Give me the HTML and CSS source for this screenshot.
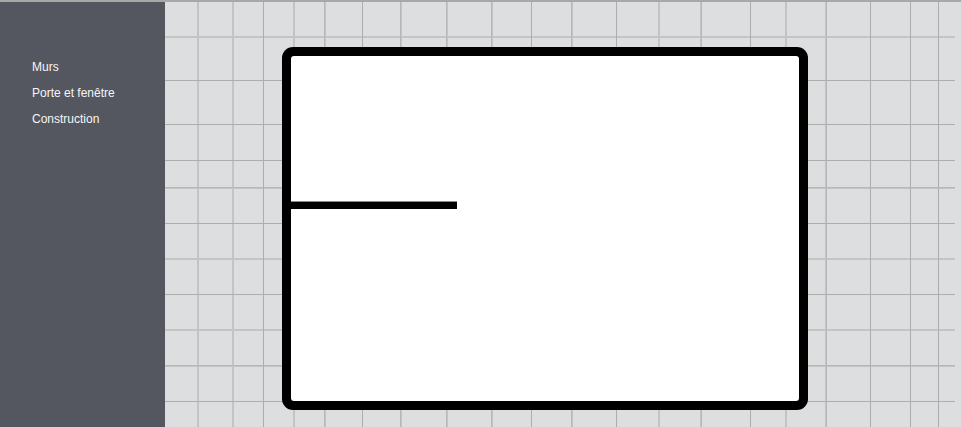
FILE: index.html
```html
<!DOCTYPE html>
<html lang="fr">
<head>
<meta charset="utf-8">
<title>Plan</title>
<link rel="stylesheet" href="styles.css">
</head>
<body>
<div class="app">
  <nav class="sidebar">
    <a class="tool" href="#murs">Murs</a>
    <a class="tool" href="#portes">Porte et fenêtre</a>
    <a class="tool" href="#construction">Construction</a>
  </nav>
  <main class="canvas">
    <svg class="plan" aria-hidden="true">
      <!-- grid: soft lines are two pixels wide, sharp lines one -->
      <path class="soft" d="M32 0h2v425h-2zM67 0h2v425h-2zM128 0h2v425h-2zM159 0h2v425h-2zM235 0h2v425h-2zM281 0h2v425h-2zM326 0h2v425h-2zM406 0h2v425h-2zM493 0h2v425h-2zM535 0h2v425h-2zM620 0h2v425h-2zM660 0h2v425h-2z"/>
      <path class="soft" d="M0 34h790v2H0zM0 185h790v2H0zM0 256h790v2H0zM0 327h790v2H0zM0 363h790v2H0z"/>
      <path class="sharp" d="M98 0h1v425h-1zM197 0h1v425h-1zM366 0h1v425h-1zM451 0h1v425h-1zM585 0h1v425h-1zM705 0h1v425h-1zM745 0h1v425h-1zM773 0h1v425h-1z"/>
      <path class="sharp" d="M0 78h790v1H0zM0 122h790v1H0zM0 158h790v1H0zM0 221h790v1H0zM0 292h790v1H0zM0 399h790v1H0z"/>
      <path class="mid" d="M159 0h1v425h-1zM235 0h1v425h-1zM281 0h1v425h-1zM326 0h1v425h-1zM406 0h1v425h-1zM536 0h1v425h-1zM661 0h1v425h-1zM0 185h790v1H0zM0 363h790v1H0z"/>
      <!-- walls -->
      <rect class="wall" x="117" y="45" width="526" height="363" rx="11"/>
      <rect class="room" x="126" y="54" width="508" height="345" rx="3"/>
      <rect class="wall" x="126" y="200" width="166" height="7"/>
      <rect class="edge" x="126" y="199" width="166" height="1"/>
    </svg>
  </main>
</div>
</body>
</html>
```
FILE: styles.css
```css
* {
  box-sizing: border-box;
}

body {
  margin: 0;
  background: #dddee0;
  font-family: "Liberation Sans", Helvetica, Arial, sans-serif;
  font-size: 12px;
  line-height: 16px;
}

.app {
  display: flex;
  min-height: 100vh;
  border-top: 2px solid #a8a8a9;
}

.sidebar {
  display: flex;
  flex: 0 0 165px;
  flex-direction: column;
  gap: 10px;
  padding: 57px 16px 16px 32px;
  background: #54575f;
}

.tool {
  color: #f6f6f7;
  text-decoration: none;
  white-space: nowrap;
}

.canvas {
  display: flex;
  flex: 1;
  min-width: 0;
}

.plan {
  flex: 1;
  min-width: 0;
  min-height: 425px;
}

.soft {
  fill: #c3c4c4;
}

.mid {
  fill: #b6b7b7;
}

.sharp {
  fill: #acadad;
}

.wall {
  fill: #000;
}

.room {
  fill: #fff;
}

.edge {
  fill: #888;
}
```
